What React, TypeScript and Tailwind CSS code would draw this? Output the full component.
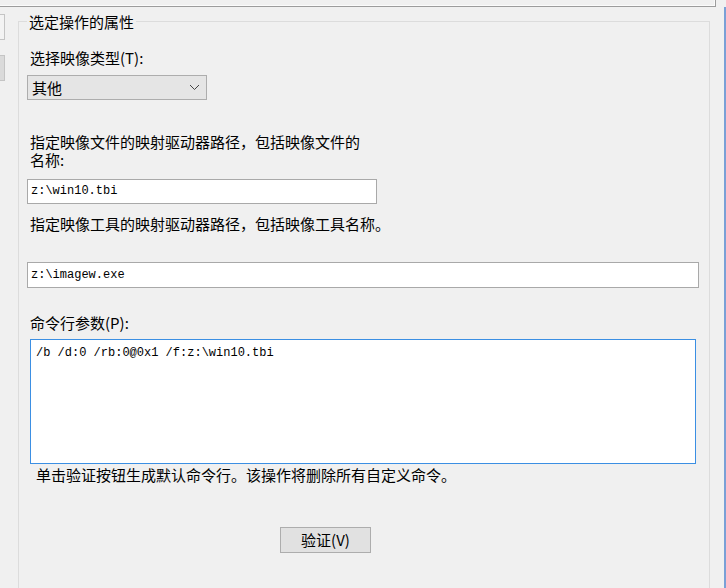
import React from "react";

const label = "text-[15px] leading-[16px] text-black";
const entry =
  "h-[25px] border border-[#a9a9a9] bg-white px-[3px] font-['Liberation_Mono',monospace] text-[12px] leading-[23px] text-black";

const App = () => {
  return (
    <div className="flex h-[588px] w-[726px] flex-col overflow-hidden bg-[#f0f0f0] font-['Noto_Sans_CJK_SC',sans-serif]">
      {/* upper list panel, only its bottom edge shows */}
      <div className="h-[7px] w-[716px] border-b border-r border-[#9c9c9c]">
        <div className="h-full border-b border-r border-[#fbfbfb]" />
      </div>

      <div className="flex flex-1">
        {/* left tabs cut off */}
        <div className="flex w-[18px] flex-col gap-[15px] pt-[7px]">
          <div className="h-[26px] w-[5px] border-y border-r border-[#c4c4c4] bg-[#f3f3f3]" />
          <div className="h-[26px] w-[5px] border-y border-r border-[#c4c4c4] bg-[#dadada]" />
        </div>

        <fieldset className="mt-[6px] flex w-[692px] flex-col border border-b-0 border-[#dcdcdc] pl-[8px]">
          <legend className="px-[2px] text-[15px] leading-[17px] text-black">选定操作的属性</legend>

          <div className={`${label} mt-[20px] ml-[3px]`}>选择映像类型(T):</div>
          <div className="mt-[9px] flex h-[25px] w-[180px] items-center justify-between border border-[#adadad] bg-[#e5e5e5] pl-[4px] pr-[6px]">
            <span className="text-[15px] leading-[16px] text-black">其他</span>
            <svg width="11" height="7" viewBox="0 0 11 7">
              <polyline points="1,1 5.5,5.5 10,1" fill="none" stroke="#444" strokeWidth="1" />
            </svg>
          </div>

          <div className="mt-[33px] ml-[3px] text-[15px] leading-[18px] text-black">
            指定映像文件的映射驱动器路径，包括映像文件的
            <br />
            名称:
          </div>
          <div className={`${entry} mt-[10px] w-[350px]`}>z:\win10.tbi</div>

          <div className={`${label} mt-[12px] ml-[3px]`}>指定映像工具的映射驱动器路径，包括映像工具名称。</div>
          <div className={`${entry} mt-[30px] h-[26px] w-[672px] leading-[24px]`}>z:\imagew.exe</div>

          <div className={`${label} mt-[27px] ml-[3px]`}>命令行参数(P):</div>
          <div className="mt-[8px] ml-[3px] h-[125px] w-[666px] border border-[#3b8fe3] bg-white px-[5px] pt-[5px] font-['Liberation_Mono',monospace] text-[12px] leading-[16px] text-black">
            /b /d:0 /rb:0@0x1 /f:z:\win10.tbi
          </div>

          <div className={`${label} mt-[3px] ml-[9px]`}>单击验证按钮生成默认命令行。该操作将删除所有自定义命令。</div>

          <button className="mt-[44px] ml-[253px] h-[26px] w-[91px] border border-[#adadad] bg-[#e1e1e1] text-[15px] leading-[16px] text-black">
            验证(V)
          </button>
        </fieldset>

        <div className="flex-1" />
        <div className="w-[2px] bg-[#7aa0d6]" />
      </div>
    </div>
  );
};

export default App;
